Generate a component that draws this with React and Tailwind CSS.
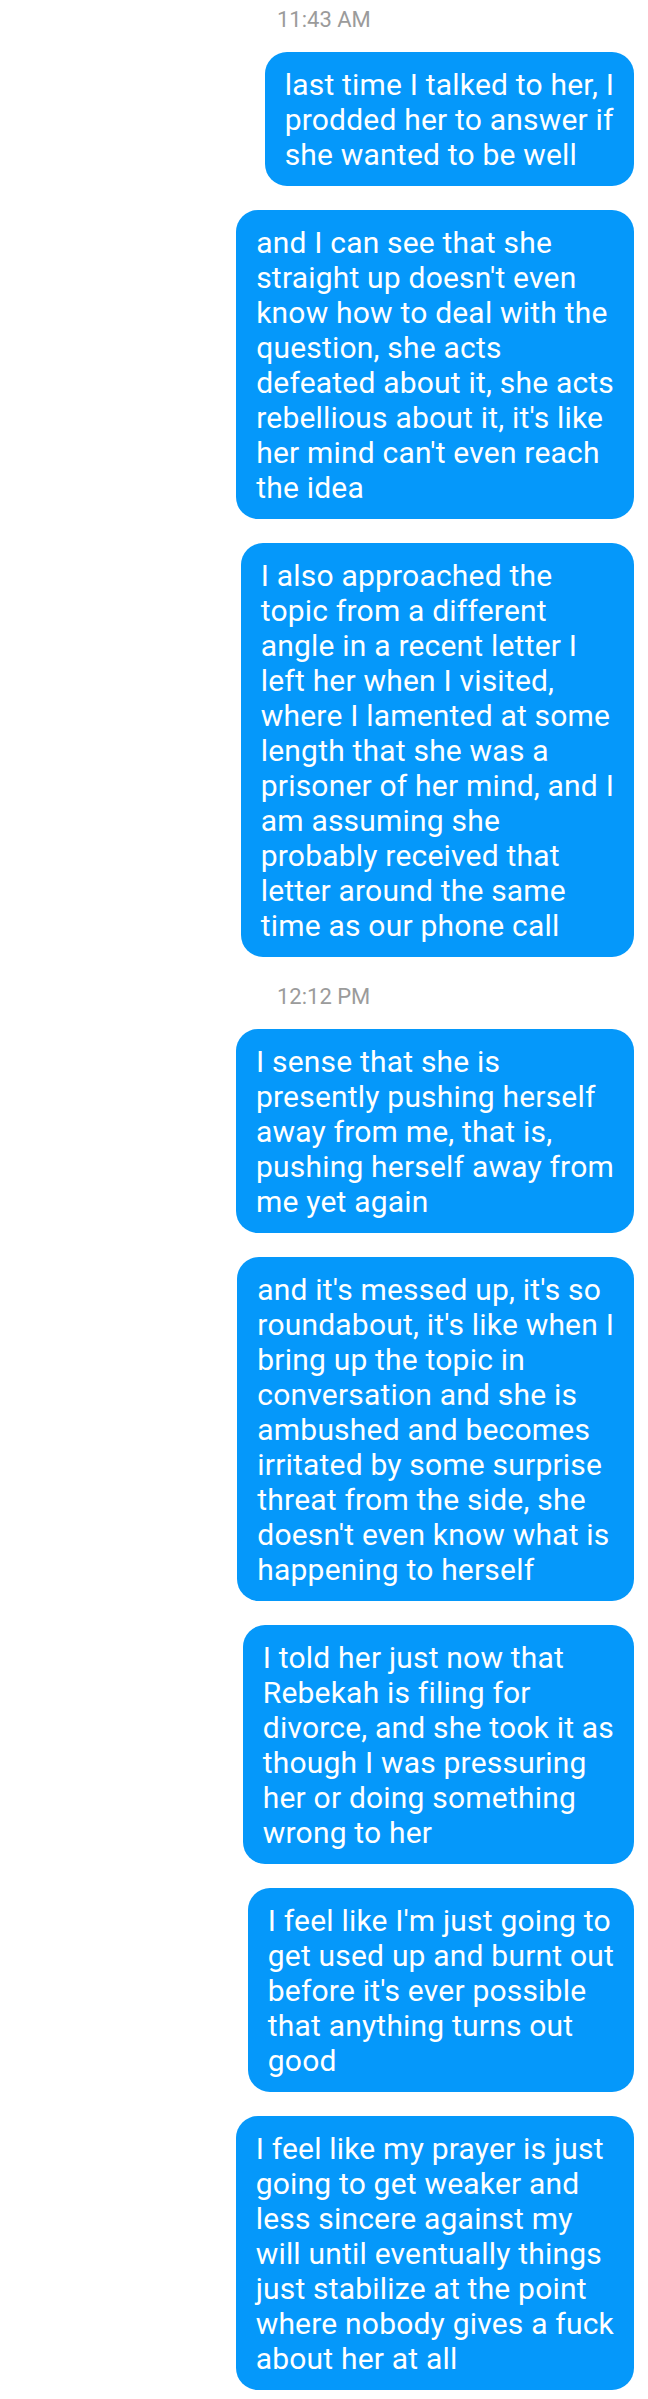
const groups = [
  {
    time: "11:43 AM",
    messages: [
      ["last time I talked to her, I", "prodded her to answer if", "she wanted to be well"],
      [
        "and I can see that she",
        "straight up doesn't even",
        "know how to deal with the",
        "question, she acts",
        "defeated about it, she acts",
        "rebellious about it, it's like",
        "her mind can't even reach",
        "the idea",
      ],
      [
        "I also approached the",
        "topic from a different",
        "angle in a recent letter I",
        "left her when I visited,",
        "where I lamented at some",
        "length that she was a",
        "prisoner of her mind, and I",
        "am assuming she",
        "probably received that",
        "letter around the same",
        "time as our phone call",
      ],
    ],
  },
  {
    time: "12:12 PM",
    messages: [
      [
        "I sense that she is",
        "presently pushing herself",
        "away from me, that is,",
        "pushing herself away from",
        "me yet again",
      ],
      [
        "and it's messed up, it's so",
        "roundabout, it's like when I",
        "bring up the topic in",
        "conversation and she is",
        "ambushed and becomes",
        "irritated by some surprise",
        "threat from the side, she",
        "doesn't even know what is",
        "happening to herself",
      ],
      [
        "I told her just now that",
        "Rebekah is filing for",
        "divorce, and she took it as",
        "though I was pressuring",
        "her or doing something",
        "wrong to her",
      ],
      [
        "I feel like I'm just going to",
        "get used up and burnt out",
        "before it's ever possible",
        "that anything turns out",
        "good",
      ],
      [
        "I feel like my prayer is just",
        "going to get weaker and",
        "less sincere against my",
        "will until eventually things",
        "just stabilize at the point",
        "where nobody gives a fuck",
        "about her at all",
      ],
    ],
  },
];

const Bubble = ({ lines }) => (
  <div className="w-fit rounded-[22px] bg-[#0598fa] px-[20px] pt-[15px] pb-[14px] text-[30px] leading-[35px] tracking-[0.2px] text-white">
    {lines.map((line, i) => (
      <div key={i} className="whitespace-nowrap">
        {line}
      </div>
    ))}
  </div>
);

export default function App() {
  return (
    <div className="min-h-[2399px] w-[648px] bg-white pt-[5px] pb-[13px] font-['Roboto',sans-serif]">
      {groups.map((group, g) => (
        <div key={g} className={g > 0 ? "mt-[25px]" : ""}>
          {/* timestamp sits a bit left of centre, like the app does */}
          <div className="pl-[277px] text-[22px] leading-[30px] text-[#9b9b9b]">
            {group.time}
          </div>
          <div className="mt-[17px] flex flex-col items-end gap-[24px] pr-[14px]">
            {group.messages.map((lines, i) => (
              <Bubble key={i} lines={lines} />
            ))}
          </div>
        </div>
      ))}
    </div>
  );
}
